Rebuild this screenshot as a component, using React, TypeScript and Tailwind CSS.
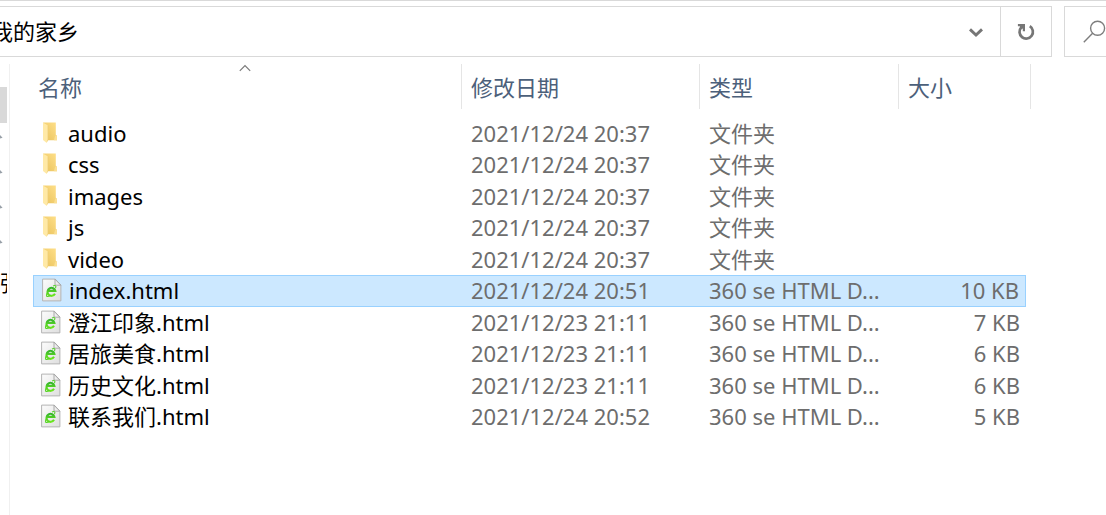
import React from "react";

type Entry = { name: string; date: string; type: string; size?: string; selected?: boolean };

const HTML_TYPE = "360 se HTML D...";

const entries: Entry[] = [
  { name: "audio", date: "2021/12/24 20:37", type: "文件夹" },
  { name: "css", date: "2021/12/24 20:37", type: "文件夹" },
  { name: "images", date: "2021/12/24 20:37", type: "文件夹" },
  { name: "js", date: "2021/12/24 20:37", type: "文件夹" },
  { name: "video", date: "2021/12/24 20:37", type: "文件夹" },
  { name: "index.html", date: "2021/12/24 20:51", type: HTML_TYPE, size: "10 KB", selected: true },
  { name: "澄江印象.html", date: "2021/12/23 21:11", type: HTML_TYPE, size: "7 KB" },
  { name: "居旅美食.html", date: "2021/12/23 21:11", type: HTML_TYPE, size: "6 KB" },
  { name: "历史文化.html", date: "2021/12/23 21:11", type: HTML_TYPE, size: "6 KB" },
  { name: "联系我们.html", date: "2021/12/24 20:52", type: HTML_TYPE, size: "5 KB" },
];

function FolderIcon() {
  return (
    <svg className="block h-6 w-5 shrink-0" viewBox="0 0 20 24" aria-hidden="true">
      <defs>
        <linearGradient id="folder-back" x1="0" x2="1" y1="1" y2="0">
          <stop offset="0" stopColor="#e9c25c" />
          <stop offset="1" stopColor="#ffe08a" />
        </linearGradient>
      </defs>
      <path d="M2.2 1.4H14.8V13.7L16 14.8V19.2H6L2.2 17Z" fill="url(#folder-back)" />
      <path d="M14.2 14.5L16 14.8V19.2H13Z" fill="#fbdf93" />
      <path d="M2 1.4L7 4.4V18.2L5.8 22L2 19Z" fill="#ffe9a6" />
      <path d="M7 4.4V18.2L6.2 20.6" fill="none" stroke="#edcd76" strokeWidth=".7" />
    </svg>
  );
}

function HtmlIcon() {
  return (
    <svg className="block h-6 w-5 shrink-0" viewBox="0 0 20 24" aria-hidden="true">
      <defs>
        <linearGradient id="page-fill" x1="0" x2="1" y1="0" y2="1">
          <stop offset="0" stopColor="#fcfcfc" />
          <stop offset="1" stopColor="#dedede" />
        </linearGradient>
        <linearGradient id="browser-green" x1="0" x2="0" y1="0" y2="1">
          <stop offset="0" stopColor="#36b52c" />
          <stop offset="1" stopColor="#6de81e" />
        </linearGradient>
      </defs>
      <path d="M.6 1.1H13.2L18.9 7V22.9H.6Z" fill="url(#page-fill)" stroke="#b4b4b4" strokeWidth="1" />
      <path d="M13 1.2V7.2H18.8Z" fill="#eeeeee" stroke="#9b9b9b" strokeWidth=".8" />
      <path
        d="M13 15.8A4 4 0 1 1 13.4 12.9H6.6"
        fill="none"
        stroke="url(#browser-green)"
        strokeWidth="2.1"
      />
      <path
        d="M11 7.9C13.3 7 14.8 8.1 13.4 10M6 13.2C4.4 15.8 4 18.2 5.2 18.5C6.2 18.7 7.6 17.9 8.7 17"
        fill="none"
        stroke="#55d326"
        strokeWidth="1.1"
      />
    </svg>
  );
}

function AddressBar() {
  return (
    <header className="flex border-t border-[#d9d9d9] pt-[5px] text-black">
      <div className="flex h-[51px] min-w-0 flex-1 border border-l-0 border-[#d9d9d9]">
        <button type="button" className="-ml-[9px] pb-[2px] whitespace-nowrap">
          我的家乡
        </button>
        <button type="button" aria-label="展开" className="ml-auto flex w-12 items-center justify-center">
          <svg className="h-4 w-4" viewBox="0 0 16 16" fill="none" stroke="#767676" strokeWidth="2.9">
            <path d="M2 5.4L8 11L14 5.4" />
          </svg>
        </button>
        <button
          type="button"
          aria-label="刷新"
          className="flex w-[51px] items-center justify-center border-l border-[#d9d9d9]"
        >
          <svg className="h-5 w-5" viewBox="0 0 20 20" aria-hidden="true">
            <path d="M13.8 4.2A6.7 6.7 0 1 1 5.2 5.4" fill="none" stroke="#767676" strokeWidth="2.7" />
            <path d="M1.9 2H9V9.2H6.8V6.6L4.6 7.4L3.8 4.2H1.9Z" fill="#767676" />
          </svg>
        </button>
      </div>
      <button
        type="button"
        aria-label="搜索"
        className="ml-3 flex h-[51px] w-[42px] shrink-0 items-center border border-r-0 border-[#d9d9d9] pl-[18px]"
      >
        <svg className="h-6 w-6 shrink-0" viewBox="0 0 24 24" fill="none" stroke="#7d7d7d" strokeWidth="1.4">
          <circle cx="14.6" cy="8.3" r="7" />
          <path d="M9.6 13.3L.8 22.2" />
        </svg>
      </button>
    </header>
  );
}

function Sidebar() {
  return (
    <nav className="flex w-[10px] shrink-0 flex-col border-r border-[#f0f0f0] pt-[23px]">
      <div className="h-9 w-[7px] bg-[#d9d9d9]" />
      {[0, 1, 2, 3].map((pin) => (
        <div key={pin} className="h-[35px] pt-[10px]">
          <svg className="block h-2 w-1" viewBox="0 0 4 8" aria-hidden="true">
            <path d="M0 2L2.6 4.8L0 5.6Z" fill="#98a0a8" />
          </svg>
        </div>
      ))}
      <div className="flex h-[38px] w-[7px] items-center overflow-hidden text-black">强</div>
    </nav>
  );
}

function HeaderCell({ label, sorted }: { label: string; sorted?: boolean }) {
  return (
    <th scope="col" className="h-[54px] p-0 text-left align-top font-normal">
      <div
        className={`relative flex h-[45px] items-center border-r border-[#e5e5e5] ${sorted ? "pl-[5px]" : "pl-[9px]"}`}
      >
        <button type="button">{label}</button>
        {sorted && (
          <svg
            className="absolute top-0 left-[206px] h-2 w-3"
            viewBox="0 0 12 8"
            fill="none"
            stroke="#7a7a7a"
            strokeWidth="1.2"
            aria-hidden="true"
          >
            <path d="M.8 6.8L6 1.6L11.2 6.8" />
          </svg>
        )}
      </div>
    </th>
  );
}

function Row({ entry }: { entry: Entry }) {
  const fill = entry.selected ? "border-y border-[#99d1ff] bg-[#cce8ff]" : "";
  return (
    <tr aria-selected={!!entry.selected} className="odd:h-[31px] even:h-8">
      <td className={`p-0 pb-[2px] pl-2 text-black ${fill} ${entry.selected ? "border-l" : ""}`}>
        <div className="flex items-center gap-[7px]">
          {entry.size ? <HtmlIcon /> : <FolderIcon />}
          <span>{entry.name}</span>
        </div>
      </td>
      <td className={`p-0 pb-[2px] pl-[9px] ${fill}`}>{entry.date}</td>
      <td className={`p-0 pb-[2px] pl-[9px] ${fill}`}>{entry.type}</td>
      <td className={`p-0 pr-[6px] pb-[2px] text-right ${fill} ${entry.selected ? "border-r" : ""}`}>{entry.size}</td>
      <td className="p-0" />
    </tr>
  );
}

export default function App() {
  return (
    <div className="flex min-h-screen flex-col overflow-hidden bg-white font-['Noto_Sans','Noto_Sans_CJK_SC',sans-serif] text-[22px] leading-[28px] text-[#6d6d6d]">
      <AddressBar />
      <div className="flex flex-1 pt-[7px]">
        <Sidebar />
        <main className="min-w-0 flex-1 overflow-hidden pl-[23px]">
          <table className="w-[998px] table-fixed border-separate border-spacing-0 whitespace-nowrap">
            <colgroup>
              <col className="w-[429px]" />
              <col className="w-[238px]" />
              <col className="w-[199px]" />
              <col className="w-[127px]" />
              <col className="w-[5px]" />
            </colgroup>
            <thead className="text-[#4c607a]">
              <tr>
                <HeaderCell label="名称" sorted />
                <HeaderCell label="修改日期" />
                <HeaderCell label="类型" />
                <th scope="col" className="h-[54px] p-0 text-left align-top font-normal">
                  <div className="flex h-[45px] items-center pl-[9px]">
                    <button type="button">大小</button>
                  </div>
                </th>
                <td className="p-0 align-top">
                  <div className="h-[45px] border-r border-[#e5e5e5]" />
                </td>
              </tr>
            </thead>
            <tbody>
              {entries.map((entry) => (
                <Row key={entry.name} entry={entry} />
              ))}
            </tbody>
          </table>
        </main>
      </div>
    </div>
  );
}
